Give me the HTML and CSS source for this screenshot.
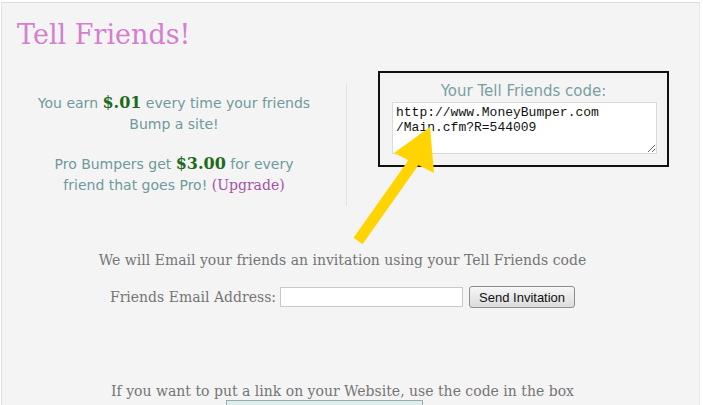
FILE: index.html
```html
<!DOCTYPE html>
<html lang="en">
<head>
    <meta charset="UTF-8">
    <title>Tell Friends!</title>
    <link rel="stylesheet" href="styles.css">
</head>
<body>
<div class="page">
    <h1>Tell Friends!</h1>

    <div class="top">
        <div class="earn">
            <p>You earn <b class="money">$.01</b> every time your friends<br>Bump a site!</p>
            <p>Pro Bumpers get <b class="money">$3.00</b> for every<br>friend that goes Pro! <a href="#" class="upgrade">(Upgrade)</a></p>
        </div>
        <div class="code-col">
            <div class="code-box">
                <div class="code-label">Your Tell Friends code:</div>
                <textarea class="code" readonly>http://www.MoneyBumper.com
/Main.cfm?R=544009</textarea>
            </div>
        </div>
    </div>

    <p class="invite">We will Email your friends an invitation using your Tell Friends code</p>

    <form class="invite-form" onsubmit="return false">
        <label>Friends Email Address:</label>
        <input type="text" class="email">
        <button type="submit">Send Invitation</button>
    </form>

    <p class="link-note">If you want to put a link on your Website, use the code in the box</p>
    <div class="link-box"></div>

    <svg class="arrow" width="120" height="130" viewBox="0 0 120 130">
        <line x1="16" y1="124" x2="74" y2="42" stroke="#ffd400" stroke-width="11"/>
        <polygon points="88,10 52,36 92,56" fill="#ffd400"/>
    </svg>
</div>
</body>
</html>
```

FILE: styles.css
```css
body {
    margin: 0;
    background: #fff;
}

.page {
    position: relative;
    margin: 2px 3px 0 1px;
    padding-right: 16px;
    height: 420px;
    border-top: 1px solid #dcdcdc;
    border-left: 1px solid #e2e2e2;
    border-right: 1px solid #e8e8e8;
    background: #f4f4f4;
    overflow: hidden;
}

h1 {
    font-family: Georgia, "DejaVu Serif", serif;
    font-weight: normal;
    font-size: 27px;
    color: #d47fcf;
    margin: 0;
    padding: 15px 0 0 15px;
    line-height: 34px;
}

.top {
    display: flex;
    margin-top: 32px;
}

.earn {
    width: 344px;
    border-right: 1px solid #e2e2e2;
    text-align: center;
    font-family: "DejaVu Sans", Tahoma, sans-serif;
    font-size: 14px;
    color: #6f9a9c;
    line-height: 21px;
    height: 122px;
}

.earn p {
    margin: 8px 0 18px;
}

.money {
    font-family: Georgia, "DejaVu Serif", serif;
    font-size: 16px;
    color: #1d6a1d;
}

.upgrade {
    font-family: Georgia, "DejaVu Serif", serif;
    color: #a451a6;
    text-decoration: none;
}

.code-col {
    padding-left: 31px;
    margin-top: -13px;
}

.code-box {
    width: 287px;
    height: 92px;
    border: 2px solid #111;
    text-align: center;
}

.code-label {
    font-family: "DejaVu Sans", Tahoma, sans-serif;
    font-size: 15px;
    color: #7a9fa3;
    margin-top: 9px;
    line-height: 18px;
}

.code {
    display: block;
    box-sizing: border-box;
    width: 265px;
    height: 52px;
    margin: 2px 0 0 12px;
    padding: 2px 3px;
    border: 1px solid #dadada;
    background: #fff;
    font-family: "Liberation Mono", "Courier New", monospace;
    font-size: 13px;
    line-height: 15px;
    color: #111;
    resize: both;
}

.invite, .link-note, .invite-form {
    font-family: Georgia, "DejaVu Serif", serif;
    font-size: 14px;
    color: #757575;
    text-align: center;
}

.invite {
    margin: 46px 0 0;
}

.invite-form {
    margin-top: 18px;
    display: flex;
    justify-content: center;
    align-items: center;
    gap: 4px;
}

.email {
    width: 181px;
    height: 18px;
    border: 1px solid #c8c8c8;
    padding: 0;
}

button {
    font-family: "Liberation Sans", Arial, sans-serif;
    font-size: 13px;
    color: #111;
    height: 22px;
    padding: 0 9px;
    margin-left: 2px;
    border: 1px solid #8e8e8e;
    border-radius: 3px;
    background: linear-gradient(#f6f6f6, #dcdcdc);
}

.link-note {
    margin: 75px 0 0;
}

.link-box {
    width: 195px;
    height: 20px;
    margin: 1px 0 0 224px;
    border: 1px solid #9aa;
    background: #deeeed;
}

.arrow {
    position: absolute;
    left: 340px;
    top: 114px;
}
```
